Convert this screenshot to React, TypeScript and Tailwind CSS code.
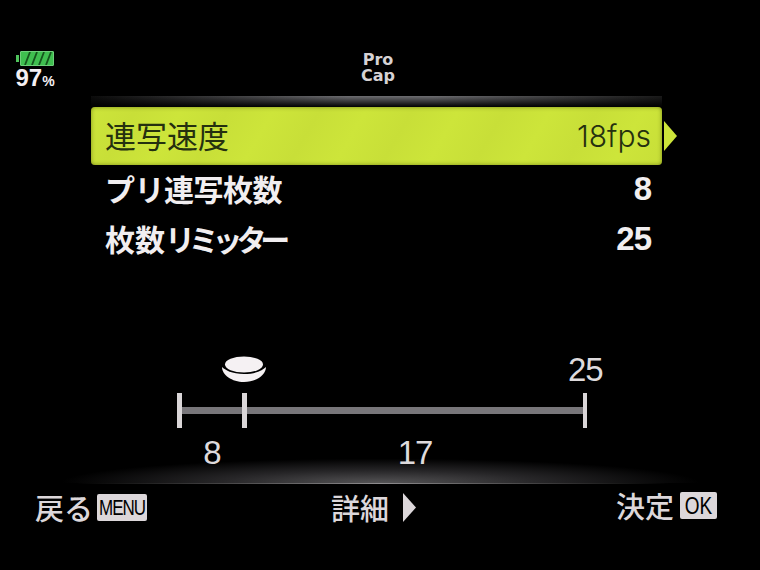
const jp = "font-['Noto_Sans_CJK_JP','Noto_Sans',sans-serif]"
const num = "font-['Inter','Liberation_Sans',sans-serif]"
const arial = "font-['Liberation_Sans',sans-serif]"

function Battery() {
  return (
    <div className="flex items-center">
      <div className="mr-[1px] h-[7px] w-[3px] bg-[#4fc35c]" />
      <div className="flex h-[15px] w-[34px] items-center justify-center rounded-[1px] border border-[#6ed07a] bg-[#3fbf4f]">
        <svg width="30" height="13" viewBox="0 0 30 13">
          <path d="M3 13 L8 0 M10 13 L15 0 M17 13 L22 0 M24 13 L29 0" stroke="#15551d" strokeWidth="1.8" />
        </svg>
      </div>
    </div>
  )
}

function Row({ label, value }: { label: React.ReactNode; value: string }) {
  return (
    <div className="flex h-[50px] items-center justify-between pb-[4px] pl-[14px] pr-[11px] text-[#f1eef0]">
      <span className={`${jp} text-[30px] leading-none font-bold`}>{label}</span>
      <span className={`${arial} text-[33px] leading-none font-bold tracking-[-1px]`}>{value}</span>
    </div>
  )
}

function Tick({ w }: { w: string }) {
  return <div className={`h-[35px] shrink-0 bg-[#dad6d8] ${w}`} />
}

export default function App() {
  return (
    <div className={`${jp} flex h-[570px] w-[760px] flex-col overflow-hidden bg-black`}>
      {/* top status */}
      <div className="flex h-[96px] shrink-0 pl-[15px] pt-[51px]">
        <div className="flex w-[40px] flex-col items-center">
          <Battery />
          <div className={`${arial} text-[24px] leading-[23px] font-bold text-[#f5f0f3]`}>
            97<span className="text-[14px]">%</span>
          </div>
        </div>
        <div className="ml-[303px] mt-[1px] flex w-[40px] flex-col items-center font-['DejaVu_Sans',sans-serif] text-[16px] leading-[16px] font-bold text-[#d6d2d4]">
          <span>Pro</span>
          <span>Cap</span>
        </div>
      </div>

      {/* menu */}
      <div className="ml-[91px] h-[11px] w-[571px] shrink-0 bg-[linear-gradient(to_bottom,transparent,#000000),linear-gradient(to_right,#0c0c0c,#6e6e72_45%,#6e6e72_60%,#1a1a1a)]" />
      <div className="ml-[91px] flex h-[58px] w-[586px] shrink-0 items-center">
        <div className="flex h-full w-[571px] items-center justify-between rounded-[4px] bg-[repeating-linear-gradient(120deg,#cde53a_0px,#c8df38_40px,#cde53a_80px)] pl-[14px] pr-[11px] text-[#25300f] shadow-[inset_0_0_4px_rgba(70,80,0,0.6)]">
          <span className="pb-[3px] text-[31px] leading-none">連写速度</span>
          <span className={`${num} text-[30px] leading-none font-light`}>18fps</span>
        </div>
        <svg className="ml-[2px]" width="13" height="30" viewBox="0 0 13 30">
          <path d="M0 0 L13 15 L0 30 Z" fill="#cde53a" />
        </svg>
      </div>
      <div className="ml-[91px] w-[571px] shrink-0">
        <Row label={<span className="tracking-[-0.5px]">プリ連写枚数</span>} value="8" />
        <Row
          label={
            <>
              枚数<span className="tracking-[-6.2px]">リミッター</span>
            </>
          }
          value="25"
        />
      </div>

      {/* slider */}
      <div className="ml-[177px] mt-[86px] flex h-[36px] w-[430px] shrink-0 items-center">
        <svg className="ml-[45px]" width="44" height="26" viewBox="0 0 44 26">
          <ellipse cx="22" cy="8.5" rx="19" ry="8" fill="#f5f1f3" />
          <path d="M0 11 C3 14 10 18 22 18 C34 18 41 14 44 11 C44 19 34 26 22 26 C10 26 0 19 0 11 Z" fill="#f5f1f3" />
        </svg>
        <span className={`${arial} ml-[302px] text-[33px] leading-none tracking-[-1px] text-[#dedadc]`}>25</span>
      </div>
      <div className="ml-[177px] mt-[6px] flex h-[35px] w-[410px] shrink-0 items-center">
        <Tick w="w-[5px]" />
        <div className="h-[7px] w-[60px] bg-[#78767a]" />
        <Tick w="w-[5px]" />
        <div className="h-[7px] w-[336px] bg-[#78767a]" />
        <Tick w="w-[4px]" />
      </div>

      {/* scale labels, glow sits behind them */}
      <div className="mt-[6px] h-[49px] w-full shrink-0 bg-[radial-gradient(ellipse_42%_50%_at_50%_100%,#555456_0%,#272628_50%,#000000_100%)]">
        <div className={`${arial} ml-[179px] flex h-[36px] w-[406px] items-center text-[33px] leading-none tracking-[-1px] text-[#dedadc]`}>
          <span className="w-[66px] text-center">8</span>
          <span className="w-[340px] text-center">17</span>
        </div>
      </div>
      <div className="h-[1px] w-full shrink-0 bg-[linear-gradient(to_right,#000000_10%,#8f8d8f_50%,#000000_88%)]" />

      {/* footer */}
      <div className="flex h-[46px] items-center pl-[35px] pr-[43px] text-[#dcd7da]">
        <div className="flex items-center gap-[4px]">
          <span className="text-[29px] leading-none font-medium">戻る</span>
          <span className={`${arial} flex h-[27px] w-[50px] items-center justify-center rounded-[2px] bg-[#dcd7da] text-[17px] leading-none tracking-[-1px] text-black`}>
            <span className="scale-y-[1.3]">MENU</span>
          </span>
        </div>
        <div className="ml-[184px] flex items-center gap-[14px]">
          <span className="text-[29px] leading-none font-medium">詳細</span>
          <svg width="13" height="29" viewBox="0 0 13 29">
            <path d="M0 0 L13 14.5 L0 29 Z" fill="#dcd7da" />
          </svg>
        </div>
        <div className="mb-[4px] ml-auto flex items-center gap-[6px]">
          <span className="text-[29px] leading-none font-medium">決定</span>
          <span className={`${arial} flex h-[27px] w-[37px] items-center justify-center rounded-[2px] bg-[#dcd7da] text-[19px] leading-none text-black`}>
            <span className="scale-y-[1.25]">OK</span>
          </span>
        </div>
      </div>
    </div>
  )
}
